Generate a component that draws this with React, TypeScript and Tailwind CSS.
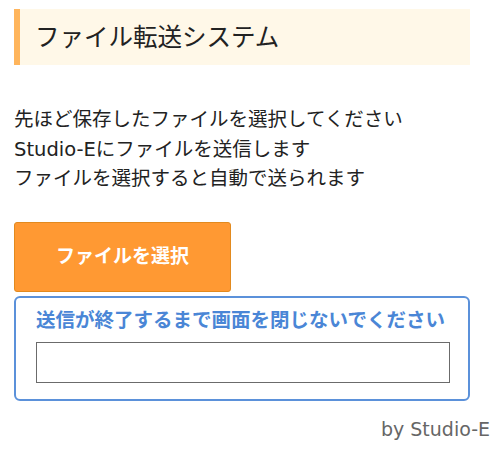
export default function App() {
  return (
    <div
      className="w-[500px] h-[460px] bg-white text-[#222] px-[14px] pt-[9px]"
      style={{ fontFamily: '"DejaVu Sans", "Noto Sans CJK JP", sans-serif' }}
    >
      {/* title */}
      <div className="w-[456px] h-[56px] bg-[#fff8e8] border-l-[6px] border-[#ffb55c] flex items-center pl-[15px]">
        <h1 className="text-[24.5px] leading-none text-[#222] pt-[2px]">ファイル転送システム</h1>
      </div>

      {/* description */}
      <div className="mt-[40px] text-[19.5px] leading-[29.5px]">
        <p>先ほど保存したファイルを選択してください</p>
        <p>Studio-Eにファイルを送信します</p>
        <p>ファイルを選択すると自動で送られます</p>
      </div>

      {/* button */}
      <button className="mt-[28px] w-[217px] h-[70px] bg-[#ff9933] border border-[#e28a1f] rounded-[3px] text-white font-bold text-[19px] flex items-center justify-center">
        ファイルを選択
      </button>

      {/* status box */}
      <div className="mt-[4px] w-[456px] h-[105px] border-2 border-[#5b91da] rounded-[6px] px-[20px] pt-[9px]">
        <p className="text-[19.5px] leading-[28px] font-bold text-[#4a86d6]">
          送信が終了するまで画面を閉じないでください
        </p>
        <div className="mt-[7px] w-[414px] h-[41px] border-[1.5px] border-[#6b6b6b] bg-white" />
      </div>

      {/* footer */}
      <div className="mt-[14px] -mr-[4px] text-right text-[19px] text-[#666]">by Studio-E</div>
    </div>
  );
}
